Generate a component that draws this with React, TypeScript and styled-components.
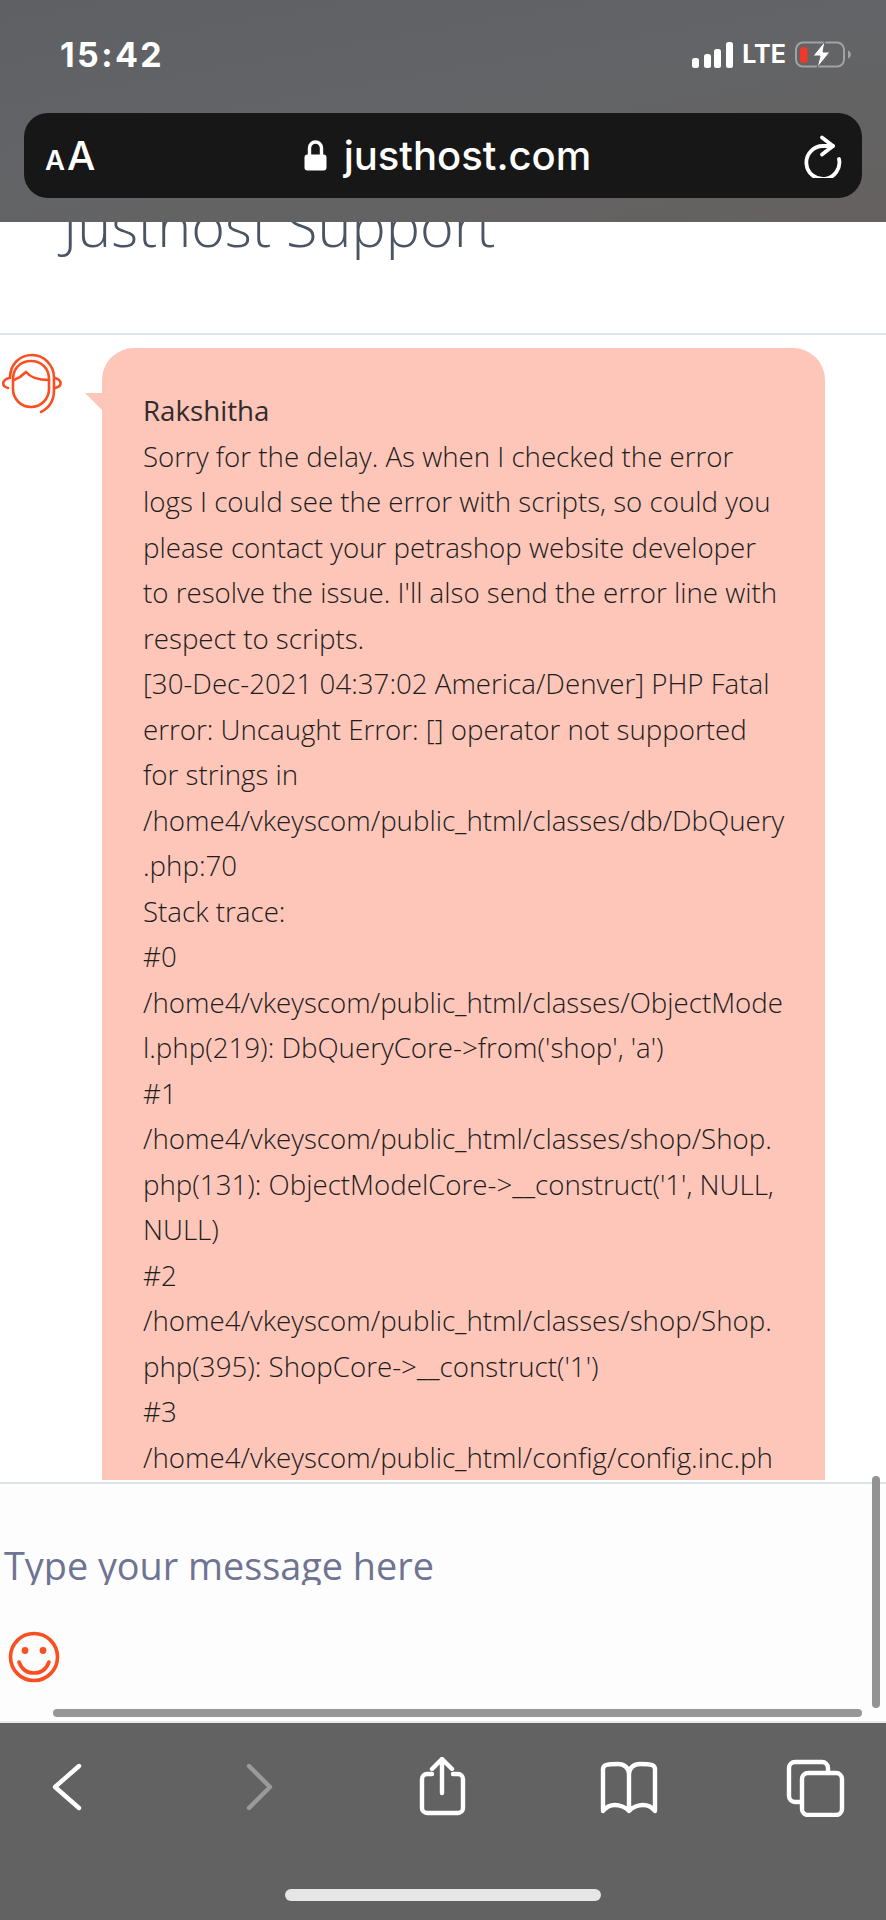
import React from 'react';
import styled, { createGlobalStyle } from 'styled-components';

const GlobalStyle = createGlobalStyle`
  html, body {
    margin: 0;
    padding: 0;
    background: #fff;
  }
`;

const Page = styled.div`
  position: relative;
  width: 886px;
  height: 1920px;
  display: flex;
  flex-direction: column;
  overflow: hidden;
  font-family: 'Open Sans', sans-serif;
`;

/* ---- safari top chrome ---- */
const TopChrome = styled.div`
  height: 222px;
  flex: none;
  box-sizing: border-box;
  padding: 41px 24px 0;
  background: linear-gradient(170deg, #5f6064 0%, #636467 45%, #636363 70%, #656160 100%);
`;

const StatusBar = styled.div`
  display: flex;
  justify-content: space-between;
  align-items: center;
  height: 27px;
  padding: 0 10px 0 36px;
  color: #fff;
  font-family: Inter, sans-serif;
`;

const Clock = styled.span`
  font-size: 34px;
  font-weight: 700;
  letter-spacing: 2.4px;
  line-height: 27px;
`;

const StatusIcons = styled.div`
  display: flex;
  align-items: center;
  gap: 9px;
`;

const Lte = styled.span`
  font-size: 25px;
  font-weight: 700;
  line-height: 27px;
`;

const UrlBar = styled.div`
  margin-top: 45px;
  height: 85px;
  border-radius: 24px;
  background: #171717;
  display: flex;
  align-items: center;
  justify-content: space-between;
  padding: 0 20px 0 21px;
  color: #fff;
  font-family: Inter, sans-serif;
`;

const FontSize = styled.div`
  display: flex;
  align-items: baseline;
  gap: 2px;
  width: 60px;
  font-weight: 500;
  line-height: 1;
`;

const SmallA = styled.span`
  font-size: 27.5px;
  font-weight: 600;
`;

const BigA = styled.span`
  font-size: 40px;
`;

const Address = styled.div`
  display: flex;
  align-items: center;
  gap: 17px;
  font-size: 40px;
  font-weight: 500;
  margin-right: 14px;
`;

/* ---- page content ---- */
const Content = styled.div`
  flex: 1;
  min-height: 0;
  overflow: hidden;
  background: #fff;
`;

const SupportHeader = styled.div`
  height: 113px;
  box-sizing: border-box;
  border-bottom: 2px solid #dfe5ee;
  padding-left: 63px;
  overflow: hidden;
`;

const SupportTitle = styled.h1`
  margin: -32px 0 0;
  font-size: 57.6px;
  line-height: 70px;
  font-weight: 300;
  color: #4a5462;
`;

const ChatRow = styled.div`
  display: flex;
  align-items: flex-start;
  padding: 13px 61px 0 1px;
`;

const Avatar = styled.svg`
  flex: none;
  width: 62px;
  height: 60px;
  margin: 5px 39px 0 0;
  overflow: visible;
`;

const Bubble = styled.div`
  position: relative;
  flex: 1;
  box-sizing: border-box;
  background: #fec5b9;
  border-radius: 32px 32px 0 0;
  padding: 40px 20px 0 41px;
  color: #201d1c;
  font-size: 27.7px;
  line-height: 45.5px;
  font-weight: 300;

  &::before {
    content: '';
    position: absolute;
    left: -17px;
    top: 45px;
    border-top: 17px solid #fec5b9;
    border-left: 17px solid transparent;
  }
`;

const SenderName = styled.div`
  font-weight: 400;
  color: #2f2c2b;
`;

const MessageLine = styled.div`
  white-space: nowrap;
`;

/* ---- composer ---- */
const Composer = styled.div`
  position: relative;
  flex: none;
  height: 241px;
  box-sizing: border-box;
  border-top: 2px solid #dbe3ea;
  border-bottom: 2px solid #e8eaec;
  background: #fdfdfd;
`;

const Placeholder = styled.div`
  margin: 68px 0 0 4px;
  height: 33px;
  overflow: hidden;
  font-size: 37.8px;
  line-height: 27px;
  color: #6e7491;
`;

const Smiley = styled.svg`
  display: block;
  width: 52px;
  height: 52px;
  margin: 46px 0 0 8px;
`;

const ScrollThumbV = styled.div`
  position: absolute;
  right: 6px;
  top: -8px;
  width: 8px;
  height: 232px;
  border-radius: 4px;
  background: #939393;
`;

const ScrollThumbH = styled.div`
  position: absolute;
  left: 53px;
  right: 24px;
  bottom: 4px;
  height: 8px;
  border-radius: 4px;
  background: #979797;
`;

/* ---- safari bottom chrome ---- */
const BottomChrome = styled.div`
  flex: none;
  height: 197px;
  box-sizing: border-box;
  background: #626262;
  padding-top: 34px;
`;

const NavIcons = styled.div`
  display: flex;
  justify-content: space-between;
  padding: 0 41px 0 38px;
`;

const NavIcon = styled.svg`
  width: 60px;
  height: 60px;
  fill: none;
  stroke: ${(props) => props.color || '#fff'};
  stroke-width: 4.4;
  stroke-linecap: round;
  stroke-linejoin: round;
`;

const HomeBar = styled.div`
  width: 316px;
  height: 12px;
  margin: 72px auto 0;
  border-radius: 6px;
  background: #e6e6e6;
`;

const messageLines = [
  'Sorry for the delay. As when I checked the error',
  'logs I could see the error with scripts, so could you',
  'please contact your petrashop website developer',
  "to resolve the issue. I'll also send the error line with",
  'respect to scripts.',
  '[30-Dec-2021 04:37:02 America/Denver] PHP Fatal',
  'error: Uncaught Error: [] operator not supported',
  'for strings in',
  '/home4/vkeyscom/public_html/classes/db/DbQuery',
  '.php:70',
  'Stack trace:',
  '#0',
  '/home4/vkeyscom/public_html/classes/ObjectMode',
  "l.php(219): DbQueryCore->from('shop', 'a')",
  '#1',
  '/home4/vkeyscom/public_html/classes/shop/Shop.',
  "php(131): ObjectModelCore->__construct('1', NULL,",
  'NULL)',
  '#2',
  '/home4/vkeyscom/public_html/classes/shop/Shop.',
  "php(395): ShopCore->__construct('1')",
  '#3',
  '/home4/vkeyscom/public_html/config/config.inc.ph',
];

const App: React.FC = () => {
  return (
    <Page>
      <GlobalStyle />
      <TopChrome>
        <StatusBar>
          <Clock>15:42</Clock>
          <StatusIcons>
            <svg width="41" height="26" viewBox="0 0 41 26" fill="#fff">
              <rect x="0" y="16" width="7" height="10" rx="2.5" />
              <rect x="12" y="12" width="7" height="14" rx="2.5" />
              <rect x="22" y="7" width="7" height="19" rx="2.5" />
              <rect x="34" y="0" width="7" height="26" rx="2.5" />
            </svg>
            <Lte>LTE</Lte>
            <svg width="57" height="27" viewBox="0 0 57 27" fill="none">
              <rect x="1" y="1.5" width="48" height="24" rx="7" stroke="#a2a2a2" strokeWidth="2" />
              <rect x="5" y="6" width="7.5" height="16" rx="3" fill="#f0392b" />
              <path d="M53 9.5c2 1 3 2.5 3 4s-1 3-3 4z" fill="#a2a2a2" />
              <path d="M30 0L18 15h7l-3 12L35 11h-7z" fill="#fff" stroke="#636363" strokeWidth="1" />
            </svg>
          </StatusIcons>
        </StatusBar>
        <UrlBar>
          <FontSize>
            <SmallA>A</SmallA>
            <BigA>A</BigA>
          </FontSize>
          <Address>
            <svg width="23" height="31" viewBox="0 0 23 31" fill="none">
              <path d="M5.5 16V8a6 6 0 0 1 12 0v8" stroke="#fff" strokeWidth="3.4" />
              <rect x="0.5" y="14.5" width="22" height="16" rx="3" fill="#fff" />
            </svg>
            justhost.com
          </Address>
          <svg width="38" height="44" viewBox="0 0 38 44" fill="none" stroke="#fff" strokeWidth="3.8" strokeLinecap="round" strokeLinejoin="round">
            <path d="M35 25A16.5 16.5 0 1 1 19 12h10" />
            <path d="M18 3.5L29 12 18 20.5" />
          </svg>
        </UrlBar>
      </TopChrome>

      <Content>
        <SupportHeader>
          <SupportTitle>Justhost Support</SupportTitle>
        </SupportHeader>
        <ChatRow>
          <Avatar viewBox="-2 0 62 60" fill="none" stroke="#fb4f22" strokeWidth="2.6" strokeLinecap="round" strokeLinejoin="round">
            <path d="M7 25C7 11 17 2 29 2s22 10 22 23v12c0 10-5 18-13 22" />
            <path d="M6 25c-7 2-8 8-1 10" />
            <path d="M52 25c7 2 8 8 0 10" />
            <path d="M10 36V26C10 15 18 8 28 8s18 7 18 18v10a18 18 0 0 1-36 0z" />
            <path d="M11 27c5-2 9-5 12-8 4 5 10 8 23 8" />
          </Avatar>
          <Bubble>
            <SenderName>Rakshitha</SenderName>
            {messageLines.map((line, i) => (
              <MessageLine key={i}>{line}</MessageLine>
            ))}
          </Bubble>
        </ChatRow>
      </Content>

      <Composer>
        <Placeholder>Type your message here</Placeholder>
        <Smiley viewBox="0 0 52 52" fill="none" stroke="#fb4f22" strokeWidth="3.6" strokeLinecap="round">
          <circle cx="26" cy="26" r="23.5" />
          <circle cx="17" cy="19.5" r="3.4" fill="#fb4f22" stroke="none" />
          <circle cx="35" cy="19.5" r="3.4" fill="#fb4f22" stroke="none" />
          <path d="M11 31c3 8 9 11 15 11s12-3 15-11" />
        </Smiley>
        <ScrollThumbV />
        <ScrollThumbH />
      </Composer>

      <BottomChrome>
        <NavIcons>
          <NavIcon viewBox="0 0 60 60">
            <path d="M41 9L17 30l24 21" />
          </NavIcon>
          <NavIcon viewBox="0 0 60 60" color="#9a9a9a">
            <path d="M24 9l21 21-21 21" />
          </NavIcon>
          <NavIcon viewBox="0 0 60 60">
            <path d="M20 17h-5a5 5 0 0 0-5 5v29a5 5 0 0 0 5 5h31a5 5 0 0 0 5-5V22a5 5 0 0 0-5-5h-5" />
            <path d="M30 36V2M20 12L30 2l10 10" />
          </NavIcon>
          <NavIcon viewBox="0 0 60 60">
            <path d="M31 52V17c0-6-5-10-11-10-5 0-9 0-12 1a5 5 0 0 0-3 5v41c3-4 8-6 12-6s11 2 14 6c3-4 10-6 14-6s9 2 12 6V13a5 5 0 0 0-3-5c-3-1-7-1-12-1-6 0-11 4-11 10" />
          </NavIcon>
          <NavIcon viewBox="0 0 60 60">
            <path d="M43 16v-5a6 6 0 0 0-6-6H10a6 6 0 0 0-6 6v28a6 6 0 0 0 6 6h7" />
            <rect x="17" y="16" width="40" height="42" rx="6" />
          </NavIcon>
        </NavIcons>
        <HomeBar />
      </BottomChrome>
    </Page>
  );
};

export default App;
